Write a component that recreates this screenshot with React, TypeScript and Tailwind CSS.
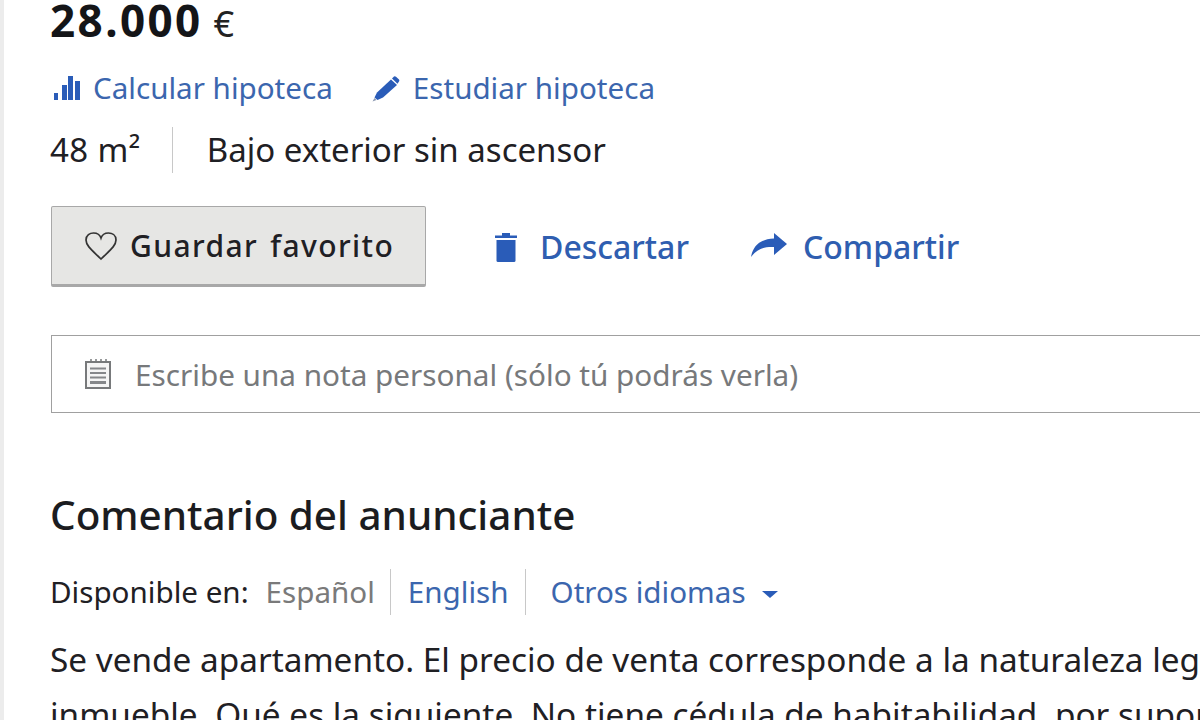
import React from "react";

const font = { fontFamily: '"Noto Sans", "Open Sans", sans-serif' };

function Bars() {
  return (
    <svg width="28" height="24" viewBox="0 0 28 24" className="shrink-0">
      <rect x="1" y="17" width="4" height="7" fill="#2a5cb8" />
      <rect x="9" y="9" width="5" height="15" fill="#2a5cb8" />
      <rect x="15" y="0" width="5" height="24" fill="#2a5cb8" />
      <rect x="22" y="5" width="5" height="19" fill="#2a5cb8" />
    </svg>
  );
}

function Pencil() {
  return (
    <svg width="28" height="26" viewBox="0 0 28 26" className="shrink-0">
      <path d="M0.500 25.500 L2.500 22 L4.500 24 Z" fill="#8a97b0" />
      <path d="M2.500 21.500 L5 16.500 L19 3.500 L25 9 L11 21.500 L5.500 24 Z" fill="#2a5cb8" />
      <path d="M20 2.500 L22 0.500 Q23 0 24 0.800 L27 3.500 Q27.800 4.500 27 5.500 L25.500 7.800 Z" fill="#2a5cb8" />
    </svg>
  );
}

function Trash() {
  return (
    <svg width="24" height="30" viewBox="0 0 24 30" className="shrink-0">
      <path d="M1 3.500 H8 V1 H16 V3.500 H23 V6 H1 Z" fill="#2a5cb8" />
      <path d="M2.500 8 H21.500 V28.500 Q21.500 30 20 30 H4 Q2.500 30 2.500 28.500 Z" fill="#2a5cb8" />
    </svg>
  );
}

function Share() {
  return (
    <svg width="36" height="24" viewBox="0 0 36 24" className="shrink-0">
      <path d="M0 24 C2 13 9 6 23 5.500 V0 L36 11 L23 22 V14 C13 13.500 6 16 0 24 Z" fill="#2a5cb8" />
    </svg>
  );
}

function Note() {
  return (
    <svg width="28" height="32" viewBox="0 0 28 32" fill="none" className="shrink-0">
      <rect x="2" y="4" width="24" height="26" fill="#f5f5f5" stroke="#77797b" strokeWidth="2" />
      <path d="M7 1V5M12 1V5M17 1V5M22 1V5" stroke="#77797b" strokeWidth="1.500" />
      <path d="M6 10.500H22M6 15H22M6 19.500H22" stroke="#85878a" strokeWidth="2" />
      <path d="M6 24.500H22" stroke="#85878a" strokeWidth="3" />
    </svg>
  );
}

function Heart() {
  return (
    <svg width="34" height="30" viewBox="0 0 34 30" fill="none" className="shrink-0">
      <path d="M17 28 C9 20 2 15 2 9 C2 4 6 2 9.500 2 C13 2 16 4 17 7 C18 4 21 2 24.500 2 C28 2 32 4 32 9 C32 15 25 20 17 28 Z" stroke="#333" strokeWidth="1.700" />
    </svg>
  );
}

export default function App() {
  return (
    <div style={font} className="h-[720px] w-[1200px] overflow-hidden bg-white whitespace-nowrap text-[#1f2024]">
      <div className="h-full border-l-4 border-[#ececec] pl-[46px]">
        <div className="flex h-[40px] items-baseline leading-[40px]">
          <span className="text-[44px] font-bold tracking-[2.400px] text-[#141518]">28.000</span>
          <span className="ml-[11px] text-[36px] text-[#222]">€</span>
        </div>
        <div className="mt-[28px] flex h-[40px] items-center text-[#3b66ae] text-[29.600px]">
          <span className="ml-[3px]"><Bars /></span>
          <span className="ml-[12px]">Calcular hipoteca</span>
          <span className="ml-[39px] mt-[2px]"><Pencil /></span>
          <span className="ml-[13px]">Estudiar hipoteca</span>
        </div>
        <div className="mt-[18px] flex h-[48px] items-center text-[33px]">
          <span className="pr-[31px] tracking-[0.400px]">48 m²</span>
          <span className="border-l border-[#c8c8c8] pl-[34px] leading-[46px]">Bajo exterior sin ascensor</span>
        </div>
        <div className="mt-[32px] ml-px flex items-center">
          <div className="flex h-[81px] w-[375px] items-center rounded-[2px] border border-[#a8a8a8] border-b-[3px] bg-[#e6e6e4] pl-8 text-[30px] font-medium tracking-[1.400px] [word-spacing:3px]">
            <Heart />
            <span className="ml-3">Guardar favorito</span>
          </div>
          <div className="ml-[68px] flex items-center text-[32px] font-medium text-[#2f5eb0]">
            <Trash />
            <span className="ml-[22px]">Descartar</span>
            <span className="ml-[62px] -mt-[4px]"><Share /></span>
            <span className="ml-4">Compartir</span>
          </div>
        </div>
        <div className="mt-[48px] ml-px flex h-[78px] w-[1200px] items-center border border-[#a0a0a0] pl-8 text-[29.700px] text-[#77797b]">
          <Note />
          <span className="ml-[23px] pt-[3px]">Escribe una nota personal (sólo tú podrás verla)</span>
        </div>
        <h2 className="mt-[79px] text-[40.400px] leading-[46px] font-medium text-[#1b1c20]">Comentario del anunciante</h2>
        <div className="mt-[31px] flex h-[46px] items-center text-[29.600px]">
          <span>Disponible en:</span>
          <span className="ml-[17px] pr-[15px] text-[#7a7a7a] border-r border-[#c8c8c8] leading-[46px]">Español</span>
          <span className="pl-[17px] pr-4 text-[#3b66ae] border-r border-[#c8c8c8] leading-[46px]">English</span>
          <span className="ml-[25px] text-[#3b66ae]">Otros idiomas</span>
          <span className="ml-4 mt-1 h-0 w-0 border-x-[8px] border-t-[7px] border-x-transparent border-t-[#2a5cb8]" />
        </div>
        <p className="mt-[17px] text-[33.350px] leading-[55px]">Se vende apartamento. El precio de venta corresponde a la naturaleza legal del</p>
        <p className="text-[33.350px] leading-[55px]">inmueble. Qué es la siguiente. No tiene cédula de habitabilidad, por suponer</p>
      </div>
    </div>
  );
}
